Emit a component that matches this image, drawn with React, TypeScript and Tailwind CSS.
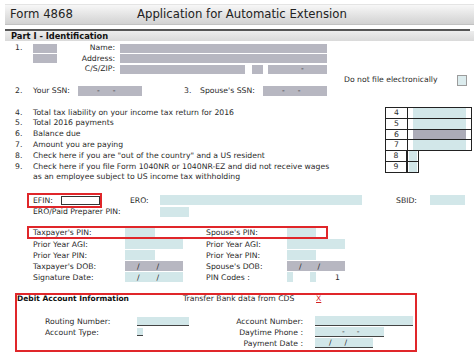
import React from "react";

const Lines: [string, string][] = [
  ["4.", "Total tax liability on your income tax return for 2016"],
  ["5.", "Total 2016 payments"],
  ["6.", "Balance due"],
  ["7.", "Amount you are paying"],
  ["8.", "Check here if you are \"out of the country\" and a US resident"],
  ["9.", "Check here if you file Form 1040NR or 1040NR-EZ and did not receive wages"],
];

export default function App() {
  return (
    <div className="relative w-[474px] h-[355px] overflow-hidden bg-white text-[#2a2a2a] font-['DejaVu_Sans',sans-serif] text-[7.7px] leading-none">
      {/* header */}
      <div className="mt-[4px] ml-[5px] h-[21px] flex items-center bg-gradient-to-b from-[#f7f7f7] to-[#d2d2d2] border-t border-[#e4e4e4] border-b border-b-[#c2c2c2] text-[11.7px] text-[#222]">
        <span className="ml-[5px] w-[127px]">Form 4868</span>
        <span>Application for Automatic Extension</span>
      </div>

      {/* Part I */}
      <div className="mt-[4px] ml-[5px] mr-[4px] h-[2px] bg-[#555]" />
      <div className="ml-[5px] h-[10px] bg-gradient-to-b from-[#ededed] to-[#dadada] flex items-center pl-[6px] font-bold text-[8.3px] text-[#111]">
        Part I - Identification
      </div>

      {/* Section 1 */}
      <div className="mt-[2px] pl-[15px]">
        <div className="flex items-center h-[10.5px]">
          <span className="w-[18px]">1.</span>
          <div className="w-[24px] h-[9px] bg-[#b7b7c1]" />
          <span className="w-[58px] text-right">Name:</span>
          <div className="ml-[5px] w-[207px] h-[9px] bg-[#b7b7c1]" />
        </div>
        <div className="flex items-center h-[10.5px]">
          <span className="w-[18px]" />
          <div className="w-[24px] h-[9px] bg-[#b7b7c1]" />
          <span className="w-[58px] text-right">Address:</span>
          <div className="ml-[5px] w-[207px] h-[9px] bg-[#b7b7c1]" />
        </div>
        <div className="flex items-center h-[10.5px]">
          <span className="w-[18px]" />
          <div className="w-[24px]" />
          <span className="w-[58px] text-right">C/S/ZIP:</span>
          <div className="ml-[5px] w-[125px] h-[9px] bg-[#b7b7c1]" />
          <div className="ml-[7px] w-[11px] h-[9px] bg-[#b7b7c1]" />
          <div className="ml-[5px] w-[59px] h-[9px] bg-[#b7b7c1] flex items-center pl-[33px]">-</div>
        </div>
        <div className="flex items-center h-[11px]">
          <span className="ml-[329px] w-[113px] whitespace-nowrap">Do not file electronically</span>
          <div className="w-[10px] h-[11px] border border-[#9c9c9c] bg-[#dcecee]" />
        </div>
        <div className="flex items-center h-[10px]">
          <span className="w-[18px]">2.</span>
          <span className="w-[45px]">Your SSN:</span>
          <div className="w-[64px] h-[10px] bg-[#b7b7c1] flex items-center">
            <span className="ml-[19px]">-</span>
            <span className="ml-[13px]">-</span>
          </div>
          <span className="ml-[42px] w-[16px]">3.</span>
          <span className="w-[63px]">Spouse's SSN:</span>
          <div className="w-[64px] h-[10px] bg-[#b7b7c1] flex items-center">
            <span className="ml-[19px]">-</span>
            <span className="ml-[13px]">-</span>
          </div>
        </div>
      </div>

      {/* Lines 4-9 */}
      <div className="mt-[11.5px] flex">
        <div className="w-[385px] pl-[15px]">
          {Lines.map(([n, t]) => (
            <div key={n} className="flex items-center h-[10.8px] whitespace-nowrap">
              <span className="w-[18px]">{n}</span>
              <span>{t}</span>
            </div>
          ))}
          <div className="flex items-center h-[10.8px] pl-[18px] whitespace-nowrap">
            as an employee subject to US income tax withholding
          </div>
        </div>
        <div className="border-t border-[#222] self-start">
          {["4", "5", "6", "7"].map((n) => (
            <div key={n} className="flex h-[10.8px] w-[87px] border-x border-b border-[#222]">
              <div className="w-[22px] border-r border-[#222] flex items-center justify-center">{n}</div>
              <div className="flex-1 pl-[5px] pr-[5px]">
                <div className={n === "6" ? "h-full bg-[#acacb8]" : "h-full bg-[#d2e7e9]"} />
              </div>
            </div>
          ))}
          {["8", "9"].map((n) => (
            <div key={n} className="flex h-[10.8px] w-[34px] border-x border-b border-[#222]">
              <div className="w-[22px] border-r-2 border-[#222] flex items-center justify-center">{n}</div>
              <div className="flex-1 px-[1px]">
                <div className="h-full bg-[#d2e7e9]" />
              </div>
            </div>
          ))}
        </div>
      </div>

      {/* ERO */}
      <div className="mt-[10.4px] flex items-center h-[15px]">
        <div className="ml-[27px] w-[75px] h-[15px] border-2 border-[#e0262a] flex items-center pl-[4px]">
          <span className="w-[28px]">EFIN:</span>
          <div className="w-[39px] h-[9px] bg-white border border-[#333]" />
        </div>
        <span className="ml-[28px] w-[30px]">ERO:</span>
        <div className="w-[202px] h-[10px] bg-[#d2e7e9]" />
        <span className="ml-[34px] w-[34px]">SBID:</span>
        <div className="w-[35px] h-[10px] bg-[#d2e7e9]" />
      </div>
      <div className="flex items-center h-[10px] -mt-[1px]">
        <span className="ml-[33px] w-[127px]">ERO/Paid Preparer PIN:</span>
        <div className="w-[29px] h-[10px] bg-[#d2e7e9]" />
      </div>

      {/* PIN section */}
      <div className="mt-[9px] ml-[27px] w-[301px] h-[13px] border-2 border-[#e0262a] flex items-center pl-[4px]">
        <span className="w-[92px]">Taxpayer's PIN:</span>
        <div className="w-[30px] h-[9px] bg-[#d2e7e9]" />
        <span className="ml-[51px] w-[81px]">Spouse's PIN:</span>
        <div className="w-[29px] h-[9px] bg-[#d2e7e9]" />
      </div>
      <div className="pl-[33px]">
        <div className="flex items-center h-[11px]">
          <span className="w-[92px]">Prior Year AGI:</span>
          <div className="w-[58px] h-[10px] bg-[#d2e7e9]" />
          <span className="ml-[23px] w-[81px]">Prior Year AGI:</span>
          <div className="w-[58px] h-[10px] bg-[#d2e7e9]" />
        </div>
        <div className="flex items-center h-[11px]">
          <span className="w-[92px]">Prior Year PIN:</span>
          <div className="w-[30px] h-[10px] bg-[#d2e7e9]" />
          <span className="ml-[51px] w-[81px]">Prior Year PIN:</span>
          <div className="w-[29px] h-[10px] bg-[#d2e7e9]" />
        </div>
        <div className="flex items-center h-[11px]">
          <span className="w-[92px]">Taxpayer's DOB:</span>
          <div className="w-[58px] h-[10px] bg-[#b7b7c1] flex items-center">
            <span className="ml-[12px]">/</span>
            <span className="ml-[17px]">/</span>
          </div>
          <span className="ml-[23px] w-[81px]">Spouse's DOB:</span>
          <div className="w-[58px] h-[10px] bg-[#b7b7c1] flex items-center">
            <span className="ml-[12px]">/</span>
            <span className="ml-[16px]">/</span>
          </div>
        </div>
        <div className="flex items-center h-[11px]">
          <span className="w-[92px]">Signature Date:</span>
          <div className="w-[58px] h-[10px] bg-[#d2e7e9] flex items-center">
            <span className="ml-[12px]">/</span>
            <span className="ml-[17px]">/</span>
          </div>
          <span className="ml-[23px] w-[81px]">PIN Codes :</span>
          <div className="w-[6px] h-[10px] bg-[#d2e7e9]" />
          <div className="ml-[17px] w-[6px] h-[10px] bg-[#d2e7e9]" />
          <span className="ml-[19px]">1</span>
        </div>
      </div>

      {/* Debit */}
      <div className="mt-[10px] ml-[15px] w-[402px] h-[59px] border-2 border-[#e0262a]">
        <div className="flex items-center h-[8px] mt-[0px]">
          <span className="w-[166px] font-bold text-[7.5px] text-[#111]">Debit Account Information</span>
          <span className="w-[133px]">Transfer Bank data from CDS</span>
          <span className="text-[#d42020] underline">X</span>
        </div>
        <div className="mt-[13px] flex items-center h-[11px]">
          <div className="w-[183px] pl-[28px] flex items-center">
            <span className="w-[92px]">Routing Number:</span>
            <div className="w-[52px] h-[9px] bg-[#d2e7e9] border-b border-[#444]" />
          </div>
          <span className="w-[103px] text-right">Account Number:</span>
          <div className="ml-[12px] w-[98px] h-[10px] bg-[#d2e7e9] border-b border-[#444]" />
        </div>
        <div className="flex items-center h-[11px]">
          <div className="w-[183px] pl-[28px] flex items-center">
            <span className="w-[92px]">Account Type:</span>
            <div className="w-[6px] h-[8px] bg-[#d2e7e9] border-b border-[#444]" />
          </div>
          <span className="w-[103px] text-right">Daytime Phone :</span>
          <div className="ml-[12px] w-[69px] h-[10px] bg-[#d2e7e9] border-b border-[#444] flex items-center">
            <span className="ml-[27px]">-</span>
            <span className="ml-[12px]">-</span>
          </div>
        </div>
        <div className="flex items-center h-[11px]">
          <div className="w-[183px]" />
          <span className="w-[103px] text-right">Payment Date :</span>
          <div className="ml-[12px] w-[58px] h-[10px] bg-[#d2e7e9] border-b border-[#444] flex items-center">
            <span className="ml-[14px]">/</span>
            <span className="ml-[13px]">/</span>
          </div>
        </div>
      </div>
    </div>
  );
}
